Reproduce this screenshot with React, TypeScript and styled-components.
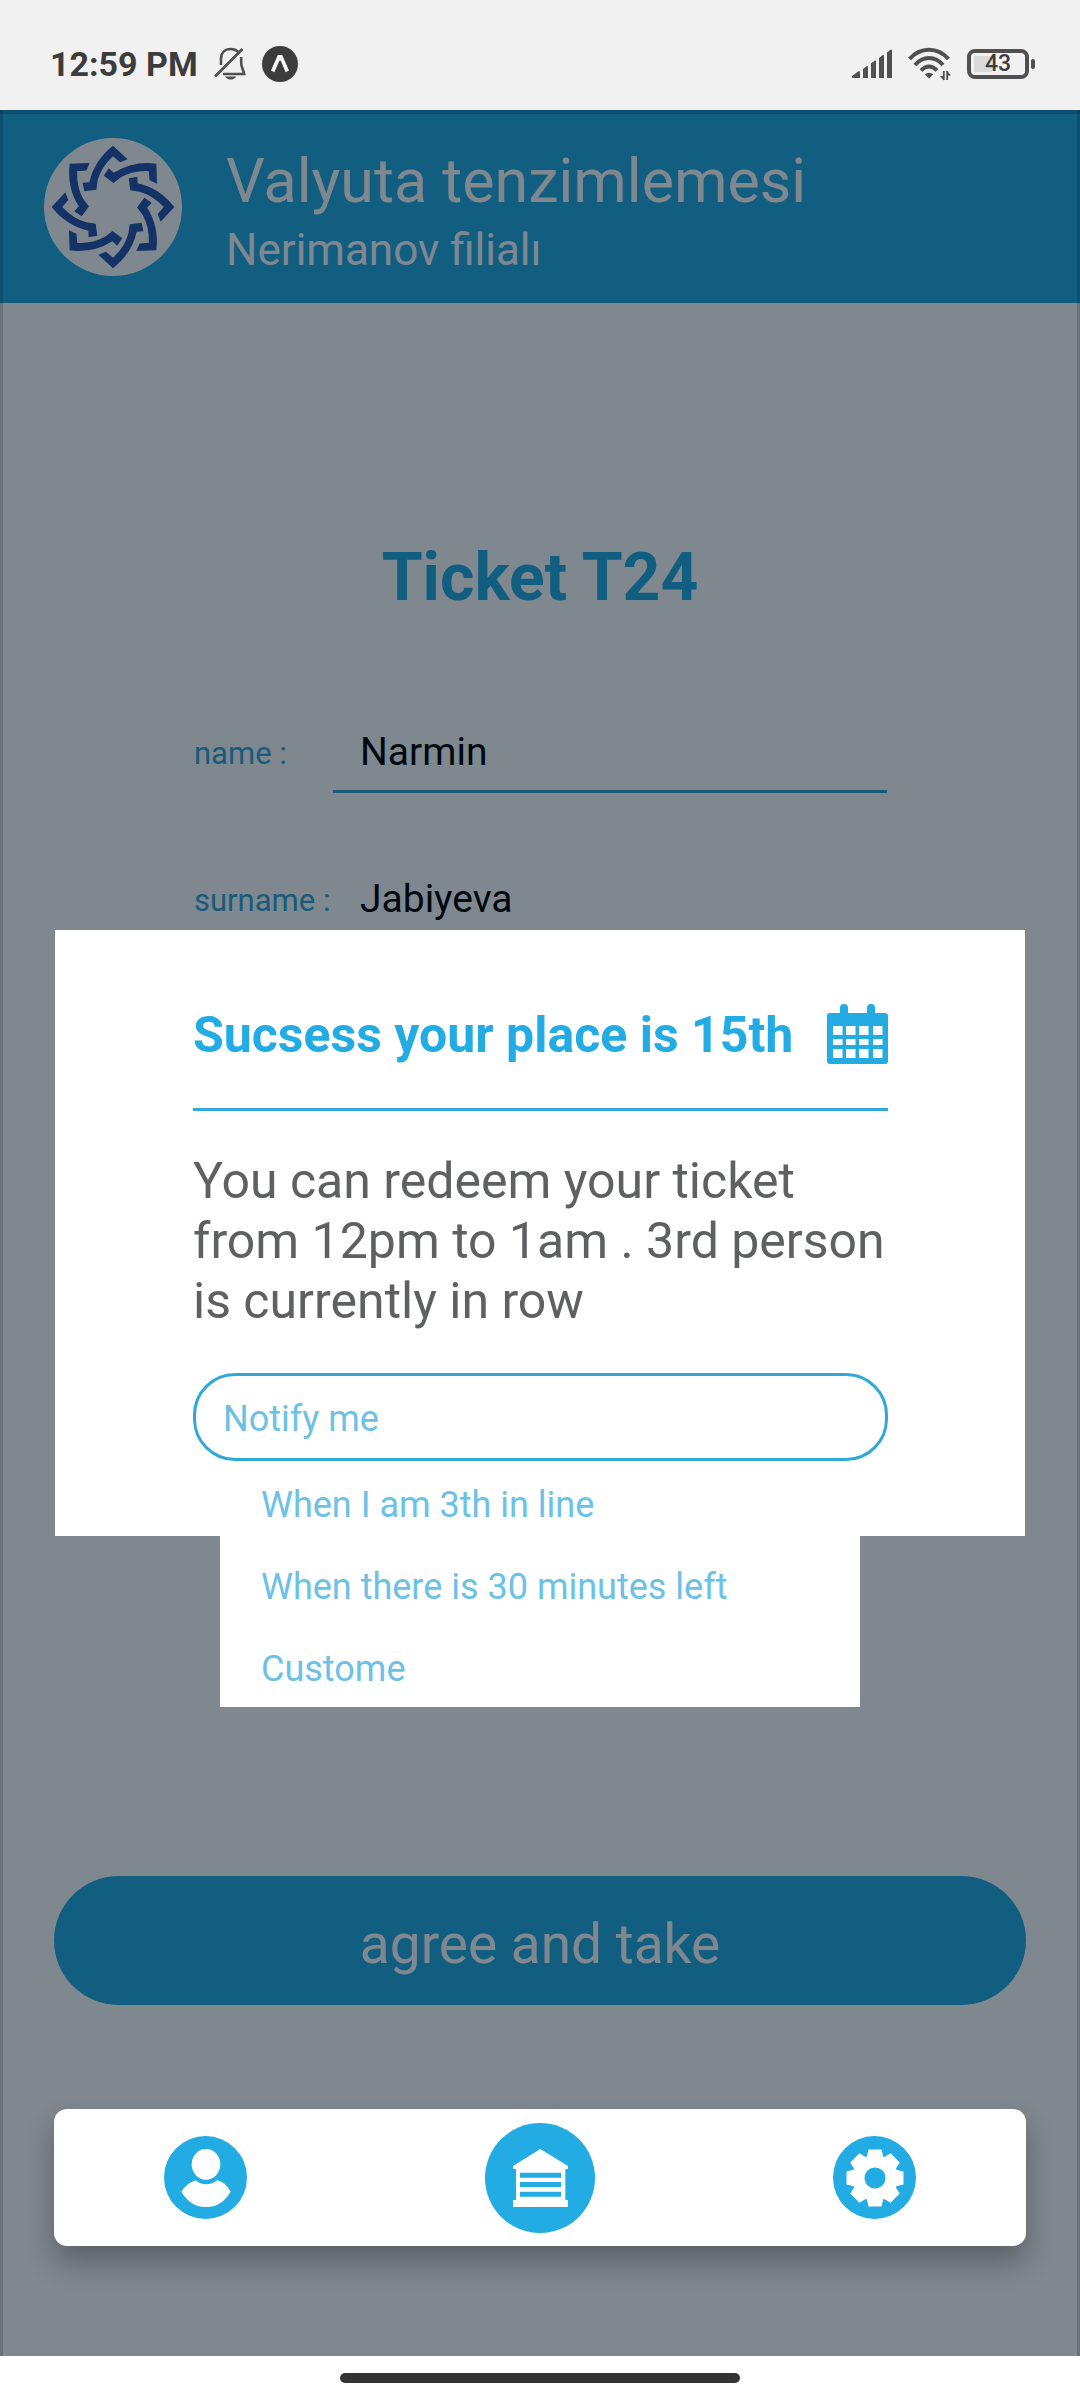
import React, { useState } from "react";
import styled, { createGlobalStyle } from "styled-components";

const color = {
  accent: "#22ace3",
  line: "#30a8d8",
  hint: "#6cc1e7",
  text: "#5f6062",
  status: "#3c3c3c",
  navy: "#2a54ac",
};

const GlobalStyle = createGlobalStyle`
  * { box-sizing: border-box; }
  body {
    margin: 0;
    background: #fff;
    font-family: Roboto, "Liberation Sans", sans-serif;
  }
  h1, h2, p, ul { margin: 0; padding: 0; }
  button, input { font: inherit; }
`;

const Page = styled.div`
  display: flex;
  flex-direction: column;
  min-height: 100vh;
`;

/* ---------- status bar ---------- */

const StatusBar = styled.div`
  display: flex;
  align-items: center;
  justify-content: space-between;
  height: 110px;
  padding: 18px 45px 0 50px;
  background: #f1f1f1;
  color: ${color.status};
`;

const StatusGroup = styled.div<{ $gap: number }>`
  display: flex;
  align-items: center;
  gap: ${(p) => p.$gap}px;
`;

const Clock = styled.time`
  font-size: 34px;
  line-height: 40px;
  font-weight: 700;
`;

const Battery = styled.div`
  position: relative;
  display: flex;
  align-items: center;
  justify-content: center;
  width: 62px;
  height: 30px;
  margin-right: 6px;
  border: 4px solid #505050;
  border-radius: 8px;
  background: linear-gradient(#dadada, #dadada) 3px center / 18px 16px no-repeat;
  font-size: 23px;
  line-height: 26px;
  font-weight: 500;

  &::after {
    content: "";
    position: absolute;
    right: -10px;
    width: 4px;
    height: 10px;
    border-radius: 2px;
    background: #505050;
  }
`;

/* ---------- screen ---------- */

const Screen = styled.div`
  position: relative;
  flex: 1;
  display: flex;
  flex-direction: column;
`;

const Header = styled.header`
  display: flex;
  align-items: center;
  gap: 44px;
  height: 193px;
  padding: 0 44px;
  background: ${color.accent};
  color: #fff;
`;

const HeaderText = styled.div`
  display: flex;
  flex-direction: column;
  gap: 8px;
  padding-top: 8px;
`;

const Title = styled.h1`
  font-size: 61px;
  line-height: 70px;
  font-weight: 400;
`;

const Subtitle = styled.p`
  font-size: 44px;
  line-height: 52px;
`;

const Form = styled.form`
  flex: 1;
  display: flex;
  flex-direction: column;
  padding: 236px 54px 104px;
`;

const TicketHeading = styled.h2`
  margin-bottom: 112px;
  color: ${color.accent};
  font-size: 66px;
  line-height: 78px;
  text-align: center;
`;

const Fields = styled.div`
  flex: 1;
  display: flex;
  flex-direction: column;
  gap: 83px;
  width: 100%;
  max-width: 694px;
  margin: 0 auto;
`;

const Field = styled.div`
  display: flex;
  align-items: flex-start;
`;

const FieldLabel = styled.label`
  flex: 0 0 140px;
  padding-left: 1px;
  color: ${color.line};
  font-size: 31px;
  line-height: 50px;
  white-space: nowrap;
`;

const FieldInput = styled.input`
  flex: 1;
  min-width: 0;
  height: 64px;
  padding: 0 0 15px 27px;
  border: 0;
  border-bottom: 3px solid ${color.line};
  border-radius: 0;
  outline: 0;
  background: none;
  color: #000;
  font-size: 39px;
  line-height: 46px;
`;

const SubmitButton = styled.button`
  height: 129px;
  padding: 6px 0 0;
  border: 0;
  border-radius: 65px;
  background: ${color.accent};
  color: #fff;
  font-size: 55px;
  line-height: 64px;
`;

/* ---------- modal ---------- */

const Backdrop = styled.div`
  position: absolute;
  inset: 0;
  z-index: 1;
  display: flex;
  align-items: center;
  padding: 0 55px;
  background: rgba(0, 16, 32, 0.5);
  box-shadow: inset 3px 0 rgba(0, 8, 16, 0.16), inset -3px 0 rgba(0, 8, 16, 0.16),
    inset 0 4px rgba(0, 8, 16, 0.16);
`;

const Dialog = styled.section`
  flex: 1;
  padding: 74px 137px 75px 138px;
  background: #fff;
`;

const DialogHead = styled.div`
  display: flex;
  align-items: flex-start;
  justify-content: space-between;
  padding-bottom: 42px;
  border-bottom: 3px solid ${color.line};
  color: ${color.accent};
`;

const DialogTitle = styled.h2`
  font-size: 50px;
  line-height: 62px;
`;

const DialogText = styled.p`
  margin: 40px 0 42px;
  color: ${color.text};
  font-size: 50px;
  line-height: 60px;
`;

const Notify = styled.div`
  position: relative;
`;

const NotifyButton = styled.button`
  display: block;
  width: 100%;
  height: 88px;
  padding: 3px 27px 0;
  border: 3px solid ${color.line};
  border-radius: 42px;
  background: #fff;
  color: ${color.hint};
  font-size: 36px;
  line-height: 42px;
  text-align: left;
`;

const Menu = styled.ul`
  position: absolute;
  top: 100%;
  left: 27px;
  right: 28px;
  background: #fff;
  list-style: none;
`;

const MenuOption = styled.button`
  display: block;
  width: 100%;
  height: 82px;
  padding: 6px 41px 0;
  border: 0;
  background: #fff;
  color: ${color.hint};
  font-size: 36px;
  line-height: 42px;
  text-align: left;
`;

/* ---------- bottom navigation ---------- */

const Nav = styled.nav`
  position: relative;
  z-index: 2;
  display: flex;
  align-items: center;
  justify-content: space-between;
  height: 137px;
  margin: 0 54px 110px;
  padding: 0 110px;
  border-radius: 13px;
  background: #fff;
  box-shadow: 0 16px 28px rgba(0, 0, 0, 0.28);
`;

const NavButton = styled.button<{ $size: number }>`
  display: flex;
  align-items: center;
  justify-content: center;
  width: ${(p) => p.$size}px;
  height: ${(p) => p.$size}px;
  padding: 0;
  border: 0;
  border-radius: 50%;
  background: ${color.accent};
  color: #fff;
`;

const HomeBar = styled.footer`
  display: flex;
  align-items: center;
  justify-content: center;
  height: 44px;
  background: #fff;
`;

const HomeIndicator = styled.div`
  width: 400px;
  height: 10px;
  border-radius: 5px;
  background: #333;
`;

/* ---------- icons ---------- */

const BellOffIcon = () => (
  <svg width="32" height="34" viewBox="0 0 32 34" fill="none" stroke="#505050" strokeWidth="2.6" aria-hidden="true">
    <path d="M7 18V12C7 5.500 11 2 16.500 2C20 2 22.500 3 24.500 5" />
    <path d="M27.200 10V16.500C27.200 20 29.500 22.500 30.200 27H9" />
    <path d="M1 29.500L28.500 2" />
    <path d="M11 29.500H22.500C21 31.500 19 32.600 16.800 32.600C14.500 32.600 12.500 31.500 11 29.500Z" fill="#505050" stroke="none" />
  </svg>
);

const ExpoIcon = () => (
  <svg width="36" height="36" viewBox="0 0 36 36" aria-hidden="true">
    <circle cx="18" cy="18" r="18" fill={color.status} />
    <path d="M15.800 9H20.200L27 24.500L23.600 26.300L18.800 14.800H17.400L12.400 26.300L9 24.500Z" fill="#f8f8f8" />
  </svg>
);

const SignalIcon = () => (
  <svg width="40" height="30" viewBox="0 0 40 30" fill="#505050" aria-hidden="true">
    <path d="M0 27L6 22.500Q8 21.500 8 23.500V29H1Q0 29 0 28Z" />
    <path d="M11 20L14.500 17.300Q16 16.500 16 18V29H11Z" />
    <path d="M19 14.500L22.500 11.800Q24 11 24 12.500V29H19Z" />
    <path d="M27 9L30.500 6.300Q32 5.500 32 7V29H27Z" />
    <path d="M35 3.500L38.500 0.800Q40 0 40 1.500V29H35Z" />
  </svg>
);

const WifiIcon = () => (
  <svg width="43" height="34" viewBox="0 0 43 34" fill="none" stroke="#505050" strokeWidth="4" aria-hidden="true">
    <path d="M1.500 12C12 -0.500 30 -0.500 40.500 12" />
    <path d="M7 18C15 8.800 27 8.800 35 18" />
    <path d="M13 23.500C18 18 24 18 29 23.500" />
    <path d="M16.800 27.500Q21 24 25.200 27.500L21 31.500Z" fill="#505050" stroke="none" />
    <path d="M35.800 24V33M39.200 33V24" strokeWidth="1.800" />
    <path d="M32 29H35.800V33.500ZM43 28.500H39.200V24Z" fill="#505050" stroke="none" />
  </svg>
);

const BankLogo = () => (
  <svg width="138" height="138" viewBox="-207 -207 414 414" role="img" aria-label="Bank logo">
    <circle r="207" fill="#fff" />
    {[0, 45, 90, 135, 180, 225, 270, 315].map((angle) => (
      <path
        key={angle}
        transform={`rotate(${angle})`}
        d="M0 -184L44 -143L21 -134L0 -152Q-35 -120 -46 -80L-50 -52L-86 -47L-91 -73L-71 -74Q-57 -139 0 -184Z"
        fill={color.navy}
      />
    ))}
  </svg>
);

const CalendarIcon = () => (
  <svg width="61" height="60" viewBox="0 0 61 60" fill="currentColor" aria-hidden="true">
    <rect y="9" width="61" height="51" rx="3" />
    <rect x="13" width="8" height="16" rx="4" />
    <rect x="40" width="8" height="16" rx="4" />
    {[6, 19, 32, 46].map((x) =>
      [
        [22, 9],
        [35, 6],
        [45, 9],
      ].map(([y, h]) => <rect key={`${x}-${y}`} x={x} y={y} width="9.500" height={h} fill="#fff" />)
    )}
  </svg>
);

const UserIcon = () => (
  <svg width="50" height="60" viewBox="0 0 150 180" fill="currentColor" aria-hidden="true">
    <ellipse cx="75" cy="49" rx="43" ry="46" />
    <path d="M44 97Q18 105 1 131Q28 177 75 177Q122 177 149 131Q134 103 109 97Q94 109 75 109Q57 109 44 97Z" />
  </svg>
);

const BranchIcon = () => (
  <svg width="55" height="58" viewBox="0 0 165 174" fill="currentColor" aria-hidden="true">
    <path
      fillRule="evenodd"
      d="M82 0L165 51V60H157V153H165V174H0V153H9V60H0V51ZM21 71V86H144V71ZM21 99V114H144V99ZM21 128V143H144V128Z"
    />
  </svg>
);

const GearIcon = () => (
  <svg width="58" height="58" viewBox="-29 -29 58 58" fill="currentColor" aria-hidden="true">
    <circle r="23" />
    {[0, 45, 90, 135].map((angle) => (
      <path key={angle} transform={`rotate(${angle})`} d="M-6.500 -28.500H6.500L8.500 -20V20L6.500 28.500H-6.500L-8.500 20V-20Z" />
    ))}
    <circle r="10.500" fill={color.accent} />
  </svg>
);

const notifyOptions = ["When I am 3th in line", "When there is 30 minutes left", "Custome"];

export default function App() {
  const [open, setOpen] = useState(true);
  const [choice, setChoice] = useState("Notify me");
  const [name, setName] = useState("Narmin");
  const [surname, setSurname] = useState("Jabiyeva");

  const choose = (option: string) => {
    setChoice(option);
    setOpen(false);
  };

  return (
    <>
      <GlobalStyle />
      <Page>
        <StatusBar>
          <StatusGroup $gap={16}>
            <Clock>12:59 PM</Clock>
            <BellOffIcon />
            <ExpoIcon />
          </StatusGroup>
          <StatusGroup $gap={16}>
            <SignalIcon />
            <WifiIcon />
            <Battery>43</Battery>
          </StatusGroup>
        </StatusBar>

        <Screen>
          <Header>
            <BankLogo />
            <HeaderText>
              <Title>Valyuta tenzimlemesi</Title>
              <Subtitle>Nerimanov filialı</Subtitle>
            </HeaderText>
          </Header>

          <Form onSubmit={(e) => e.preventDefault()}>
            <TicketHeading>Ticket T24</TicketHeading>
            <Fields>
              <Field>
                <FieldLabel htmlFor="name">name :</FieldLabel>
                <FieldInput id="name" value={name} onChange={(e) => setName(e.target.value)} />
              </Field>
              <Field>
                <FieldLabel htmlFor="surname">surname :</FieldLabel>
                <FieldInput id="surname" value={surname} onChange={(e) => setSurname(e.target.value)} />
              </Field>
            </Fields>
            <SubmitButton type="submit">agree and take</SubmitButton>
          </Form>

          <Backdrop>
            <Dialog role="dialog" aria-labelledby="dialog-title">
              <DialogHead>
                <DialogTitle id="dialog-title">Sucsess your place is 15th</DialogTitle>
                <CalendarIcon />
              </DialogHead>
              <DialogText>You can redeem your ticket from 12pm to 1am . 3rd person is currently in row</DialogText>
              <Notify>
                <NotifyButton type="button" aria-expanded={open} onClick={() => setOpen(!open)}>
                  {choice}
                </NotifyButton>
                {open && (
                  <Menu>
                    {notifyOptions.map((option) => (
                      <li key={option}>
                        <MenuOption type="button" onClick={() => choose(option)}>
                          {option}
                        </MenuOption>
                      </li>
                    ))}
                  </Menu>
                )}
              </Notify>
            </Dialog>
          </Backdrop>

          <Nav aria-label="Main">
            <NavButton type="button" $size={83} aria-label="Profile">
              <UserIcon />
            </NavButton>
            <NavButton type="button" $size={110} aria-label="Branches">
              <BranchIcon />
            </NavButton>
            <NavButton type="button" $size={83} aria-label="Settings">
              <GearIcon />
            </NavButton>
          </Nav>
        </Screen>

        <HomeBar>
          <HomeIndicator />
        </HomeBar>
      </Page>
    </>
  );
}
